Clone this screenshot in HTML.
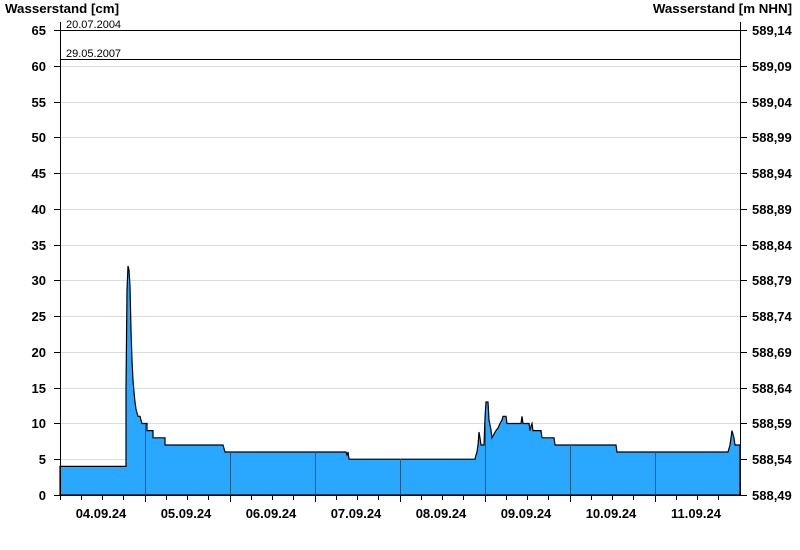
<!DOCTYPE html>
<html><head><meta charset="utf-8"><style>
html,body{margin:0;padding:0;background:#fff;}
svg{display:block;font-family:"Liberation Sans",Arial,sans-serif;}
</style></head><body>
<svg width="800" height="550" viewBox="0 0 800 550" xmlns="http://www.w3.org/2000/svg">
<rect width="800" height="550" fill="#fff"/>
<g stroke="#dcdcdc" stroke-width="1">
<line x1="60" x2="740" y1="459.5" y2="459.5"/>
<line x1="60" x2="740" y1="423.5" y2="423.5"/>
<line x1="60" x2="740" y1="388.5" y2="388.5"/>
<line x1="60" x2="740" y1="352.5" y2="352.5"/>
<line x1="60" x2="740" y1="316.5" y2="316.5"/>
<line x1="60" x2="740" y1="280.5" y2="280.5"/>
<line x1="60" x2="740" y1="245.5" y2="245.5"/>
<line x1="60" x2="740" y1="209.5" y2="209.5"/>
<line x1="60" x2="740" y1="173.5" y2="173.5"/>
<line x1="60" x2="740" y1="137.5" y2="137.5"/>
<line x1="60" x2="740" y1="102.5" y2="102.5"/>
<line x1="60" x2="740" y1="66.5" y2="66.5"/>
</g>
<path fill="#2aa8ff" stroke="#000" stroke-width="1.2" d="M60,495 L60,466.4 L126,466.4 L126,388 L127,290 L128,266 L129,270 L130,286 L131,330 L132,360 L133,380 L134,392 L135,402 L136,409 L137,413 L138,416.3 L140,416.3 L141,420 L142,423.5 L147,423.5 L147,430.6 L153,430.6 L153,437.8 L165,437.8 L165,445 L223,445 L225,452 L346,452 L347,455 L348,452 L349,459 L350,459.2 L475,459.2 L476,455 L477,452 L478,445 L479,432 L480,438 L481,445 L484,445 L485,418 L486,402 L488,402 L489,420 L491,430 L492,437.8 L494,434 L496,430.6 L498,428 L500,423.5 L502,420 L503,416.3 L506,416.3 L507,423.5 L521,423.5 L522,416.3 L523,423.5 L529,423.5 L530,430.6 L531,426 L532,423.5 L533,430.6 L541,430.6 L542,437.8 L554,437.8 L555,445 L616,445 L617,452 L728,452 L730,445 L732,430.6 L734,438 L735,445 L740,445 L740,495 Z"/>
<g stroke="#1f5a85" stroke-width="1">
<line x1="145.5" x2="145.5" y1="424" y2="495"/>
<line x1="230.5" x2="230.5" y1="452" y2="495"/>
<line x1="315.5" x2="315.5" y1="452" y2="495"/>
<line x1="400.5" x2="400.5" y1="459" y2="495"/>
<line x1="485.5" x2="485.5" y1="420" y2="495"/>
<line x1="570.5" x2="570.5" y1="445" y2="495"/>
<line x1="655.5" x2="655.5" y1="452" y2="495"/>
</g>
<g stroke="#000" stroke-width="1">
<line x1="60" x2="740" y1="30.5" y2="30.5"/>
<line x1="60" x2="740" y1="59.5" y2="59.5"/>
<line x1="60.5" x2="60.5" y1="22" y2="500"/>
<line x1="740.5" x2="740.5" y1="22" y2="495"/>
<line x1="60" x2="741" y1="495.5" y2="495.5"/>
</g>
<g stroke="#000" stroke-width="1">
<path d="M54,495.5h6M54,459.5h6M54,423.5h6M54,388.5h6M54,352.5h6M54,316.5h6M54,280.5h6M54,245.5h6M54,209.5h6M54,173.5h6M54,137.5h6M54,102.5h6M54,66.5h6M54,30.5h6"/>
<path d="M741,495.5h6M741,459.5h6M741,423.5h6M741,388.5h6M741,352.5h6M741,316.5h6M741,280.5h6M741,245.5h6M741,209.5h6M741,173.5h6M741,137.5h6M741,102.5h6M741,66.5h6M741,30.5h6"/>
<path d="M81.5,495v5M102.5,495v5M123.5,495v5M145.5,495v7M166.5,495v5M187.5,495v5M208.5,495v5M230.5,495v7M251.5,495v5M272.5,495v5M293.5,495v5M315.5,495v7M336.5,495v5M357.5,495v5M378.5,495v5M400.5,495v7M421.5,495v5M442.5,495v5M463.5,495v5M485.5,495v7M506.5,495v5M527.5,495v5M548.5,495v5M570.5,495v7M591.5,495v5M612.5,495v5M633.5,495v5M655.5,495v7M676.5,495v5M697.5,495v5M718.5,495v5"/>
</g>
<g font-size="13.3" font-weight="bold" fill="#000">
<text x="5" y="13">Wasserstand [cm]</text>
<text x="792" y="13" text-anchor="end">Wasserstand [m NHN]</text>
</g>
<g font-size="11" fill="#000">
<text x="66" y="28">20.07.2004</text>
<text x="66" y="57">29.05.2007</text>
</g>
<g font-size="13" font-weight="bold" fill="#000" text-anchor="end">
<text x="46" y="500">0</text>
<text x="46" y="464">5</text>
<text x="46" y="428">10</text>
<text x="46" y="393">15</text>
<text x="46" y="357">20</text>
<text x="46" y="321">25</text>
<text x="46" y="285">30</text>
<text x="46" y="250">35</text>
<text x="46" y="214">40</text>
<text x="46" y="178">45</text>
<text x="46" y="142">50</text>
<text x="46" y="107">55</text>
<text x="46" y="71">60</text>
<text x="46" y="35">65</text>
</g>
<g font-size="13" font-weight="bold" fill="#000">
<text x="752" y="500">588,49</text>
<text x="752" y="464">588,54</text>
<text x="752" y="428">588,59</text>
<text x="752" y="393">588,64</text>
<text x="752" y="357">588,69</text>
<text x="752" y="321">588,74</text>
<text x="752" y="285">588,79</text>
<text x="752" y="250">588,84</text>
<text x="752" y="214">588,89</text>
<text x="752" y="178">588,94</text>
<text x="752" y="142">588,99</text>
<text x="752" y="107">589,04</text>
<text x="752" y="71">589,09</text>
<text x="752" y="35">589,14</text>
</g>
<g font-size="13" font-weight="bold" fill="#000" text-anchor="middle">
<text x="101" y="518">04.09.24</text>
<text x="186" y="518">05.09.24</text>
<text x="271" y="518">06.09.24</text>
<text x="356" y="518">07.09.24</text>
<text x="441" y="518">08.09.24</text>
<text x="526" y="518">09.09.24</text>
<text x="611" y="518">10.09.24</text>
<text x="696" y="518">11.09.24</text>
</g>
</svg>
</body></html>
